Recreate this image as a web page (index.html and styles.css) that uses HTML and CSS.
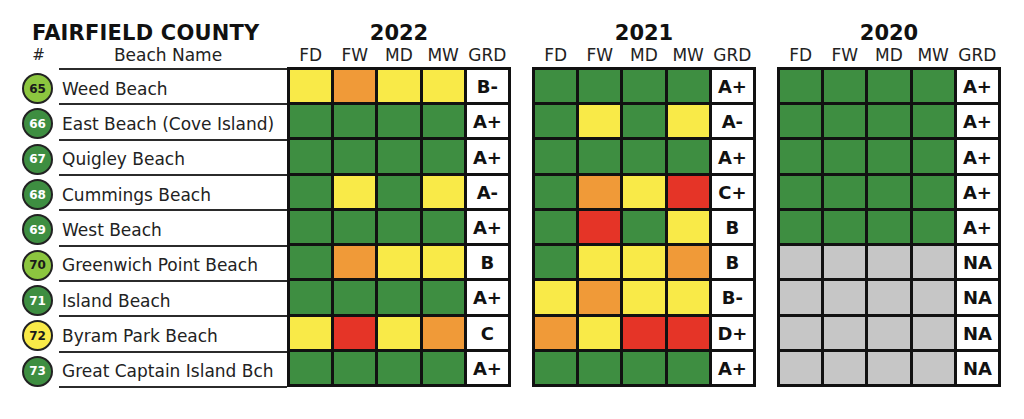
FILE: index.html
```html
<!DOCTYPE html>
<html>
<head>
<meta charset="utf-8">
<link rel="stylesheet" href="styles.css">
</head>
<body>
<div class="page">
  <div class="left">
    <div class="title">FAIRFIELD COUNTY</div>
    <div class="lhead"><span class="hash">#</span><span class="bname">Beach Name</span></div>
    <div class="list">
      <div class="topline"></div>
      <div class="numcell"><span class="num lg">65</span></div><div class="name">Weed Beach</div>
      <div class="numcell"><span class="num dg">66</span></div><div class="name">East Beach (Cove Island)</div>
      <div class="numcell"><span class="num dg">67</span></div><div class="name">Quigley Beach</div>
      <div class="numcell"><span class="num dg">68</span></div><div class="name">Cummings Beach</div>
      <div class="numcell"><span class="num dg">69</span></div><div class="name">West Beach</div>
      <div class="numcell"><span class="num lg">70</span></div><div class="name">Greenwich Point Beach</div>
      <div class="numcell"><span class="num dg">71</span></div><div class="name">Island Beach</div>
      <div class="numcell"><span class="num yl">72</span></div><div class="name">Byram Park Beach</div>
      <div class="numcell"><span class="num dg">73</span></div><div class="name">Great Captain Island Bch</div>
    </div>
  </div>

  <div class="year">
    <div class="ytitle">2022</div>
    <div class="labels"><span>FD</span><span>FW</span><span>MD</span><span>MW</span><span>GRD</span></div>
    <div class="grid">
      <div class="c y"></div><div class="c o"></div><div class="c y"></div><div class="c y"></div><div class="c g">B-</div>
      <div class="c gr"></div><div class="c gr"></div><div class="c gr"></div><div class="c gr"></div><div class="c g">A+</div>
      <div class="c gr"></div><div class="c gr"></div><div class="c gr"></div><div class="c gr"></div><div class="c g">A+</div>
      <div class="c gr"></div><div class="c y"></div><div class="c gr"></div><div class="c y"></div><div class="c g">A-</div>
      <div class="c gr"></div><div class="c gr"></div><div class="c gr"></div><div class="c gr"></div><div class="c g">A+</div>
      <div class="c gr"></div><div class="c o"></div><div class="c y"></div><div class="c y"></div><div class="c g">B</div>
      <div class="c gr"></div><div class="c gr"></div><div class="c gr"></div><div class="c gr"></div><div class="c g">A+</div>
      <div class="c y"></div><div class="c r"></div><div class="c y"></div><div class="c o"></div><div class="c g">C</div>
      <div class="c gr"></div><div class="c gr"></div><div class="c gr"></div><div class="c gr"></div><div class="c g">A+</div>
    </div>
  </div>

  <div class="year">
    <div class="ytitle">2021</div>
    <div class="labels"><span>FD</span><span>FW</span><span>MD</span><span>MW</span><span>GRD</span></div>
    <div class="grid">
      <div class="c gr"></div><div class="c gr"></div><div class="c gr"></div><div class="c gr"></div><div class="c g">A+</div>
      <div class="c gr"></div><div class="c y"></div><div class="c gr"></div><div class="c y"></div><div class="c g">A-</div>
      <div class="c gr"></div><div class="c gr"></div><div class="c gr"></div><div class="c gr"></div><div class="c g">A+</div>
      <div class="c gr"></div><div class="c o"></div><div class="c y"></div><div class="c r"></div><div class="c g">C+</div>
      <div class="c gr"></div><div class="c r"></div><div class="c gr"></div><div class="c y"></div><div class="c g">B</div>
      <div class="c gr"></div><div class="c y"></div><div class="c y"></div><div class="c o"></div><div class="c g">B</div>
      <div class="c y"></div><div class="c o"></div><div class="c y"></div><div class="c y"></div><div class="c g">B-</div>
      <div class="c o"></div><div class="c y"></div><div class="c r"></div><div class="c r"></div><div class="c g">D+</div>
      <div class="c gr"></div><div class="c gr"></div><div class="c gr"></div><div class="c gr"></div><div class="c g">A+</div>
    </div>
  </div>

  <div class="year">
    <div class="ytitle">2020</div>
    <div class="labels"><span>FD</span><span>FW</span><span>MD</span><span>MW</span><span>GRD</span></div>
    <div class="grid">
      <div class="c gr"></div><div class="c gr"></div><div class="c gr"></div><div class="c gr"></div><div class="c g">A+</div>
      <div class="c gr"></div><div class="c gr"></div><div class="c gr"></div><div class="c gr"></div><div class="c g">A+</div>
      <div class="c gr"></div><div class="c gr"></div><div class="c gr"></div><div class="c gr"></div><div class="c g">A+</div>
      <div class="c gr"></div><div class="c gr"></div><div class="c gr"></div><div class="c gr"></div><div class="c g">A+</div>
      <div class="c gr"></div><div class="c gr"></div><div class="c gr"></div><div class="c gr"></div><div class="c g">A+</div>
      <div class="c na"></div><div class="c na"></div><div class="c na"></div><div class="c na"></div><div class="c g">NA</div>
      <div class="c na"></div><div class="c na"></div><div class="c na"></div><div class="c na"></div><div class="c g">NA</div>
      <div class="c na"></div><div class="c na"></div><div class="c na"></div><div class="c na"></div><div class="c g">NA</div>
      <div class="c na"></div><div class="c na"></div><div class="c na"></div><div class="c na"></div><div class="c g">NA</div>
    </div>
  </div>
</div>
</body>
</html>
```

FILE: styles.css
```css
* { box-sizing: border-box; }
html, body { margin: 0; background: #fff; }
body {
  font-family: "DejaVu Sans", "Liberation Sans", sans-serif;
  color: #1a1a1a;
}
.page {
  display: flex;
  gap: 21px;
  padding-top: 22px;
  width: 1024px;
  height: 419px;
}
.left {
  width: 287px;
  flex: none;
  margin-right: -21px;
}
.title {
  font-weight: bold;
  font-size: 21px;
  line-height: 23px;
  height: 23px;
  padding-left: 32px;
  color: #111;
  white-space: nowrap;
  letter-spacing: 0.2px;
}
.lhead {
  display: flex;
  font-size: 17px;
  line-height: 20px;
  height: 20px;
  color: #222;
}
.hash {
  width: 59px;
  text-align: center;
  padding-left: 18px;
  font-size: 15px;
}
.bname {
  flex: 1;
  text-align: center;
  padding-right: 10px;
}
.list {
  margin-top: 3px;
  display: grid;
  grid-template-columns: 59px 1fr;
  grid-template-rows: 2px repeat(9, 1fr);
  height: 320px;
}
.topline {
  grid-column: 2;
  background: #2b2b2b;
}
.numcell {
  display: flex;
  align-items: center;
  padding-left: 22px;
  padding-top: 2px;
}
.num {
  width: 31px;
  height: 31px;
  border-radius: 50%;
  border: 2px solid #222;
  display: flex;
  align-items: center;
  justify-content: center;
  font-size: 12px;
  font-weight: bold;
}
.num.lg { background: #8cc63f; color: #1a1a1a; }
.num.dg { background: #3e8e41; color: #fff; }
.num.yl { background: #f9ea48; color: #1a1a1a; }
.name {
  border-bottom: 2px solid #2b2b2b;
  display: flex;
  align-items: center;
  padding-left: 3px;
  padding-top: 4px;
  font-size: 17px;
  white-space: nowrap;
  color: #222;
}
.year {
  width: 224px;
  flex: none;
}
.ytitle {
  font-weight: bold;
  font-size: 21px;
  line-height: 23px;
  height: 23px;
  text-align: center;
  color: #111;
}
.labels {
  display: grid;
  grid-template-columns: repeat(5, 1fr);
  column-gap: 3px;
  padding: 0 3px;
  font-size: 17px;
  line-height: 20px;
  height: 20px;
  text-align: center;
  color: #222;
}
.grid {
  margin-top: 2px;
  display: grid;
  grid-template-columns: repeat(5, 1fr);
  grid-template-rows: repeat(9, 1fr);
  gap: 3px;
  padding: 3px;
  height: 320px;
  background: #111;
}
.c {
  display: flex;
  align-items: center;
  justify-content: center;
  padding-top: 1px;
  font-weight: bold;
  font-size: 18px;
  color: #111;
}
.c.gr { background: #3e8e41; }
.c.y { background: #f9ea48; }
.c.o { background: #f09a38; }
.c.r { background: #e53427; }
.c.na { background: #c6c6c6; }
.c.g { background: #fff; }
```
